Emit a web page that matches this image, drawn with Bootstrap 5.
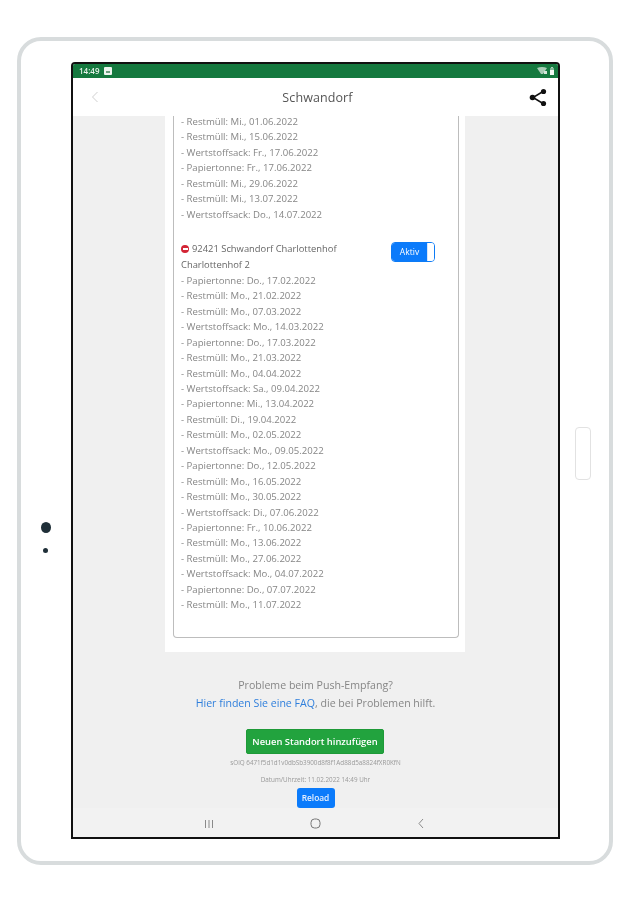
<!DOCTYPE html>
<html lang="de">
<head>
<meta charset="utf-8">
<title>Schwandorf</title>
<link href="https://cdn.jsdelivr.net/npm/bootstrap@5.3.0/dist/css/bootstrap.min.css" rel="stylesheet">
<style>
html,body{height:100%;background:#fff;overflow:hidden}
body{font-family:"Open Sans","Liberation Sans",sans-serif;color:#777;padding:37px 17px 0}
.tablet{width:596px;height:828px;border:4px solid #d8dcdd;border-radius:24px;padding:21px 49px 0 50px;position:relative;background:#fff;filter:blur(.4px)}
.cam-a,.cam-b{position:absolute;background:#1f2f38;border-radius:50%}
.cam-a{width:10px;height:11px;left:20px;top:481px}
.cam-b{width:5px;height:5px;left:22px;top:507px}
.home-key{position:absolute;left:554px;top:386px;width:16px;height:53px;border:1px solid #e2e2e2;border-radius:4px}
.screen{height:777px;border:2px solid #111;border-radius:4px 4px 0 0;background:#f0f0f0;overflow:hidden}
.statusbar{height:14px;background:#15793f;color:#e8f2ea;font-size:8px;line-height:14px;padding:0 3px 0 6px;font-weight:600}
.apphead{height:38px;background:#fff;padding:0 11px 0 18px}
.apphead-title{font-size:12.5px;color:#555;letter-spacing:.1px;padding-top:3px;margin-left:7px}
.panel-white{width:300px;background:#fff;margin-left:92px;padding:0 6px 14px 8px;overflow:hidden}
.inner-box{height:524px;margin-top:-2px;border:1px solid #bdbdbd;border-top:0;border-radius:0 0 4px 4px;padding:0 7px;font-size:9.6px;line-height:15.43px;color:#868686}
.loc-wrap{margin-bottom:1px}
.loc-head{color:#666;font-size:9.4px;margin-top:19px;width:200px}
.stop-dot{display:inline-block;width:8px;height:8px;border-radius:50%;background:#d32535;vertical-align:-1px;position:relative;margin-right:3px}
.stop-dot::after{content:"";position:absolute;left:1.5px;right:1.5px;top:3px;height:2px;background:#fff}
.toggle-box{width:44px;height:20px;border:1px solid #0d7bf5;border-radius:4px;background:#fff;margin:20px 16px 0 0;overflow:hidden}
.toggle-on{width:35px;background:#0b7bfb;color:#fff;font-size:8.5px;line-height:18px;text-align:center}
.toggle-handle{flex:1;background:#fff;border-left:1px solid #d8e6f8}
.below{text-align:center;font-size:10.6px;line-height:17.5px;color:#868686;padding-top:25px}
.below a{color:#2f7fdc;text-decoration:none}
.btn-add{display:block;width:138px;height:25px;margin:17px 0 0 173px;padding:0;background:#22a33e;border:1px solid #1e9a38;border-radius:2px;color:#fff;font-size:9.4px;font-weight:600;line-height:23px}
.tiny{font-size:6.3px;line-height:8px;color:#999;white-space:nowrap}
.tiny-id{margin-top:5px}
.tiny-date{margin-top:9px}
.btn-reload{display:block;width:38px;height:20px;margin:4px auto 0;padding:0;background:#0b7bfb;border:0;border-radius:3px;color:#e6f0ff;font-size:8.4px;line-height:20px;font-weight:600}
.softkeys{height:29px;background:#f2f2f2;padding:2px 133px 0 131px}
</style>
</head>
<body>
<div class="tablet">
  <span class="cam-a"></span><span class="cam-b"></span><span class="home-key"></span>
  <div class="screen">
    <div class="statusbar d-flex align-items-center justify-content-between">
      <span class="d-flex align-items-center gap-1">14:49
        <svg width="8" height="8" viewBox="0 0 8 8"><rect width="8" height="8" rx="1" fill="#eef5ef"/><rect x="2" y="4" width="4" height="2" fill="#6c9f80"/></svg>
      </span>
      <svg width="18" height="8" viewBox="0 0 18 8"><path d="M0 1Q5-1 10 1L6 7H4Z" fill="#a9ccb6"/><path d="M7 7h3V4H7z" fill="#d5e6da"/><path d="M13 3h4v5h-4z" fill="#f3f8f4"/><path d="M14 3V1.500a1 1 0 0 1 2 0V3" fill="none" stroke="#f3f8f4"/></svg>
    </div>
    <div class="apphead d-flex align-items-center justify-content-between">
      <svg width="8" height="12" viewBox="0 0 8 12"><path d="M6.500 1 1.500 6l5 5" fill="none" stroke="#cfcfcf" stroke-width="1"/></svg>
      <span class="apphead-title">Schwandorf</span>
      <svg width="18" height="19" viewBox="0 0 18 19"><path d="M14 3.500 4 9.500l10 6" fill="none" stroke="#111" stroke-width="1.500"/><circle cx="14.500" cy="3.500" r="2.600" fill="#111"/><circle cx="3.500" cy="9.500" r="2.800" fill="#111"/><circle cx="14.500" cy="15.500" r="2.600" fill="#111"/></svg>
    </div>
    <div class="panel-white">
      <div class="inner-box">
        <div>- Restmüll: Mi., 01.06.2022</div>
        <div>- Restmüll: Mi., 15.06.2022</div>
        <div>- Wertstoffsack: Fr., 17.06.2022</div>
        <div>- Papiertonne: Fr., 17.06.2022</div>
        <div>- Restmüll: Mi., 29.06.2022</div>
        <div>- Restmüll: Mi., 13.07.2022</div>
        <div>- Wertstoffsack: Do., 14.07.2022</div>
        <div class="d-flex justify-content-between loc-wrap">
          <div class="loc-head"><span class="stop-dot"></span>92421 Schwandorf Charlottenhof Charlottenhof 2</div>
          <div class="toggle-box d-flex"><span class="toggle-on">Aktiv</span><span class="toggle-handle"></span></div>
        </div>
        <div>- Papiertonne: Do., 17.02.2022</div>
        <div>- Restmüll: Mo., 21.02.2022</div>
        <div>- Restmüll: Mo., 07.03.2022</div>
        <div>- Wertstoffsack: Mo., 14.03.2022</div>
        <div>- Papiertonne: Do., 17.03.2022</div>
        <div>- Restmüll: Mo., 21.03.2022</div>
        <div>- Restmüll: Mo., 04.04.2022</div>
        <div>- Wertstoffsack: Sa., 09.04.2022</div>
        <div>- Papiertonne: Mi., 13.04.2022</div>
        <div>- Restmüll: Di., 19.04.2022</div>
        <div>- Restmüll: Mo., 02.05.2022</div>
        <div>- Wertstoffsack: Mo., 09.05.2022</div>
        <div>- Papiertonne: Do., 12.05.2022</div>
        <div>- Restmüll: Mo., 16.05.2022</div>
        <div>- Restmüll: Mo., 30.05.2022</div>
        <div>- Wertstoffsack: Di., 07.06.2022</div>
        <div>- Papiertonne: Fr., 10.06.2022</div>
        <div>- Restmüll: Mo., 13.06.2022</div>
        <div>- Restmüll: Mo., 27.06.2022</div>
        <div>- Wertstoffsack: Mo., 04.07.2022</div>
        <div>- Papiertonne: Do., 07.07.2022</div>
        <div>- Restmüll: Mo., 11.07.2022</div>
      </div>
    </div>
    <div class="below">
      <div>Probleme beim Push-Empfang?</div>
      <div><a href="#">Hier finden Sie eine FAQ</a>, die bei Problemen hilft.</div>
      <button class="btn btn-add" type="button">Neuen Standort hinzufügen</button>
      <div class="tiny tiny-id">sOiQ 6471f5d1d1v0dbSb3900d8f8f1Ad88d5a8824fXR0KfN</div>
      <div class="tiny tiny-date">Datum/Uhrzeit: 11.02.2022 14:49 Uhr</div>
      <button class="btn btn-reload" type="button">Reload</button>
    </div>
    <div class="softkeys d-flex align-items-center justify-content-between">
      <svg width="10" height="10" viewBox="0 0 10 10"><path d="M1.500 1v8M5 1v8M8.500 1v8" stroke="#8a8a8a" stroke-width="1"/></svg>
      <svg width="11" height="11" viewBox="0 0 11 11"><rect x="1" y="1" width="9" height="9" rx="3.500" fill="none" stroke="#777" stroke-width="1"/></svg>
      <svg width="8" height="11" viewBox="0 0 8 11"><path d="M6 1 2 5.500 6 10" fill="none" stroke="#8a8a8a" stroke-width="1"/></svg>
    </div>
  </div>
</div>
</body>
</html>
